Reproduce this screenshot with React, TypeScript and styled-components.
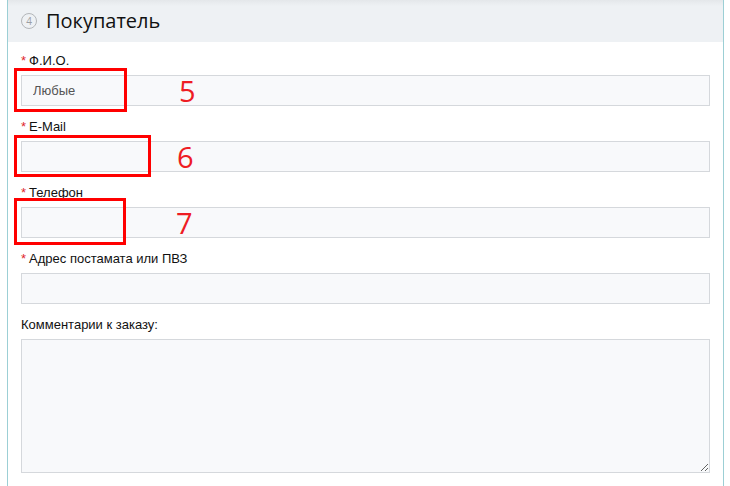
import React from "react";
import styled, { createGlobalStyle } from "styled-components";

const Global = createGlobalStyle`
  html, body { margin: 0; padding: 0; background: #fff; }
  body { font-family: "Liberation Sans", Arial, sans-serif; }
`;

const Frame = styled.div`
  margin-left: 7px;
  width: 715px;
  height: 486px;
  border-left: 1px solid #9ccfd5;
  border-right: 1px solid #9ccfd5;
  box-sizing: content-box;
  overflow: hidden;
`;

const Header = styled.div`
  height: 42px;
  display: flex;
  align-items: center;
  gap: 9px;
  padding-left: 13px;
  background: linear-gradient(to bottom, #e4e7ea 0px, #eef1f4 6px, #eef1f4 100%);
`;

const StepCircle = styled.span`
  width: 14px;
  height: 14px;
  border: 1.5px solid #b3b6b9;
  border-radius: 50%;
  display: inline-flex;
  align-items: center;
  justify-content: center;
  font-family: "Open Sans", sans-serif;
  font-size: 10px;
  color: #9a9ea2;
  line-height: 1;
`;

const Title = styled.h2`
  margin: 0;
  font-family: "Open Sans", sans-serif;
  font-weight: 400;
  font-size: 20px;
  color: #111;
  position: relative;
  top: -1px;
`;

const Body = styled.div`
  padding: 11px 13px 0 13px;
  display: flex;
  flex-direction: column;
  gap: 13px;
`;

const Field = styled.div`
  display: flex;
  flex-direction: column;
  gap: 6px;
`;

const Label = styled.label`
  font-size: 13px;
  line-height: 16px;
  color: #111;
`;

const Req = styled.span`
  color: #e0262b;
  margin-right: 3px;
`;

const InputWrap = styled.div`
  position: relative;
`;

const Input = styled.input`
  box-sizing: border-box;
  display: block;
  height: 31px;
  width: 100%;
  border: 1px solid #d5d8dc;
  background: #f8f9fb;
  padding: 0 11px;
  font-family: "Liberation Sans", Arial, sans-serif;
  font-size: 13px;
  color: #555;
  outline: none;
`;

const TextArea = styled.textarea`
  box-sizing: border-box;
  height: 134px;
  width: 100%;
  border: 1px solid #d5d8dc;
  background: #f8f9fb;
  resize: vertical;
  outline: none;
  display: block;
`;

/* Red annotation drawn over the input (overlay) */
const Marker = styled.div<{ $w: number; $h: number; $dy: number }>`
  position: absolute;
  left: -7px;
  top: ${(p) => p.$dy}px;
  width: ${(p) => p.$w}px;
  height: ${(p) => p.$h}px;
  box-sizing: border-box;
  border: 3px solid #ff0000;
  pointer-events: none;
`;

const Num = styled.span<{ $x: number }>`
  position: absolute;
  left: ${(p) => p.$x}px;
  top: 0;
  bottom: 0;
  display: flex;
  align-items: center;
  font-family: "Open Sans", sans-serif;
  font-size: 29px;
  line-height: 1;
  color: #ee1c24;
  pointer-events: none;
`;

type Note = { n: string; w: number; h: number; dy: number; x: number };

const fields: { label: string; value: string; note?: Note }[] = [
  { label: "Ф.И.О.", value: "Любые", note: { n: "5", w: 113, h: 44, dy: -7, x: 158 } },
  { label: "E-Mail", value: "", note: { n: "6", w: 137, h: 42, dy: -6, x: 156 } },
  { label: "Телефон", value: "", note: { n: "7", w: 112, h: 47, dy: -9, x: 155 } },
  { label: "Адрес постамата или ПВЗ", value: "" },
];

export default function App() {
  return (
    <>
      <Global />
      <Frame>
        <Header>
          <StepCircle>4</StepCircle>
          <Title>Покупатель</Title>
        </Header>
        <Body>
          {fields.map((f) => (
            <Field key={f.label}>
              <Label>
                <Req>*</Req>
                {f.label}
              </Label>
              <InputWrap>
                <Input defaultValue={f.value} />
                {f.note && (
                  <>
                    <Marker $w={f.note.w} $h={f.note.h} $dy={f.note.dy} />
                    <Num $x={f.note.x}>{f.note.n}</Num>
                  </>
                )}
              </InputWrap>
            </Field>
          ))}
          <Field>
            <Label>Комментарии к заказу:</Label>
            <TextArea />
          </Field>
        </Body>
      </Frame>
    </>
  );
}
